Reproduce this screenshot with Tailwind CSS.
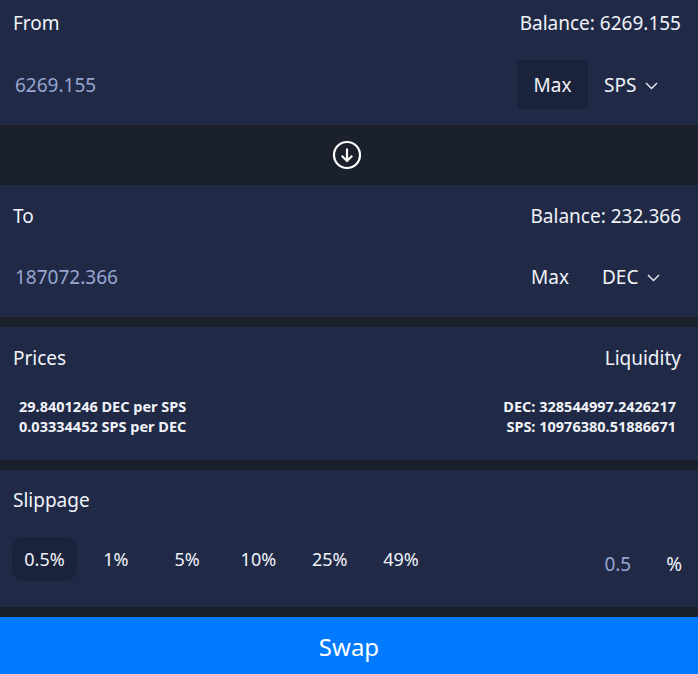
<!DOCTYPE html>
<html lang="en">

<head>
  <meta charset="UTF-8">
  <meta name="viewport" content="width=device-width, initial-scale=1.0">
  <title>Swap</title>
  <script src="https://cdn.jsdelivr.net/npm/@tailwindcss/browser@4"></script>
</head>

<body class="bg-[#1b212c] text-[#f1f3f8] font-['Noto_Sans',sans-serif] text-[19px] leading-[24px] h-[674px] w-[698px] overflow-hidden">
  <!-- From -->
  <section class="bg-[#202a47] h-[125px] px-[13px]">
    <div class="flex justify-between pt-[11px] pr-[4px]">
      <span>From</span>
      <span>Balance: 6269.155</span>
    </div>
    <div class="flex items-center justify-between mt-[25px] pl-[2px]">
      <span class="text-[#97a5d0]">6269.155</span>
      <div class="flex items-center">
        <span class="bg-[#1b233c] w-[71px] h-[49px] flex items-center justify-center">Max</span>
        <span class="flex items-center w-[97px] pl-[16px] gap-[9px]">SPS
          <svg class="w-[13px] h-[8px] mt-[3px]" viewBox="0 0 13 8" fill="none" stroke="currentColor" stroke-width="1.3"><path d="M1 1l5.5 5.5L12 1" /></svg>
        </span>
      </div>
    </div>
  </section>

  <!-- Arrow -->
  <div class="h-[60px] flex items-center justify-center pr-[4px]">
    <svg class="w-[30px] h-[30px] text-white" viewBox="0 0 30 30" fill="none" stroke="currentColor" stroke-width="2.2"><circle cx="15" cy="15" r="13" /><path d="M15 8.5v12.5M9.8 15.8l5.2 5.2 5.2-5.2" /></svg>
  </div>

  <!-- To -->
  <section class="bg-[#202a47] h-[132px] px-[13px]">
    <div class="flex justify-between pt-[19px] pr-[4px]">
      <span>To</span>
      <span>Balance: 232.366</span>
    </div>
    <div class="flex items-center justify-between mt-[24px] pl-[2px]">
      <span class="text-[#97a5d0]">187072.366</span>
      <div class="flex items-center h-[49px]">
        <span class="w-[71px] flex items-center justify-center pr-[5px]">Max</span>
        <span class="flex items-center w-[97px] pl-[14px] gap-[9px]">DEC
          <svg class="w-[13px] h-[8px] mt-[3px]" viewBox="0 0 13 8" fill="none" stroke="currentColor" stroke-width="1.3"><path d="M1 1l5.5 5.5L12 1" /></svg>
        </span>
      </div>
    </div>
  </section>

  <!-- Prices -->
  <section class="bg-[#202a47] h-[133px] mt-[10px] px-[13px]">
    <div class="flex justify-between pt-[19px] pr-[4px]">
      <span>Prices</span>
      <span>Liquidity</span>
    </div>
    <div class="flex justify-between mt-[26px] pl-[6px] pr-[9px] text-[14.5px] leading-[20px] font-bold">
      <div>
        <div>29.8401246 DEC per SPS</div>
        <div>0.03334452 SPS per DEC</div>
      </div>
      <div class="text-right">
        <div>DEC: 328544997.2426217</div>
        <div>SPS: 10976380.51886671</div>
      </div>
    </div>
  </section>

  <!-- Slippage -->
  <section class="bg-[#202a47] h-[137px] mt-[10px] pl-[12px] pr-[16px]">
    <div class="pt-[18px] pl-[1px]">Slippage</div>
    <div class="flex items-center justify-between mt-[25px] text-[18px]">
      <div class="flex">
        <span class="w-[65px] h-[44px] mr-[6.3px] flex items-center justify-center rounded-[12px] bg-[#1b233c]">0.5%</span>
        <span class="w-[65px] h-[44px] mr-[6.3px] flex items-center justify-center">1%</span>
        <span class="w-[65px] h-[44px] mr-[6.3px] flex items-center justify-center">5%</span>
        <span class="w-[65px] h-[44px] mr-[6.3px] flex items-center justify-center">10%</span>
        <span class="w-[65px] h-[44px] mr-[6.3px] flex items-center justify-center">25%</span>
        <span class="w-[65px] h-[44px] flex items-center justify-center">49%</span>
      </div>
      <div class="flex items-center gap-[35px] pt-[10px]">
        <span class="text-[#97a5d0] text-[19px]">0.5</span>
        <span class="text-[19px]">%</span>
      </div>
    </div>
  </section>

  <!-- Swap -->
  <button class="block w-full h-[57px] mt-[10px] bg-[#007bff] text-white text-[24px] pt-[3px]">Swap</button>
</body>

</html>
